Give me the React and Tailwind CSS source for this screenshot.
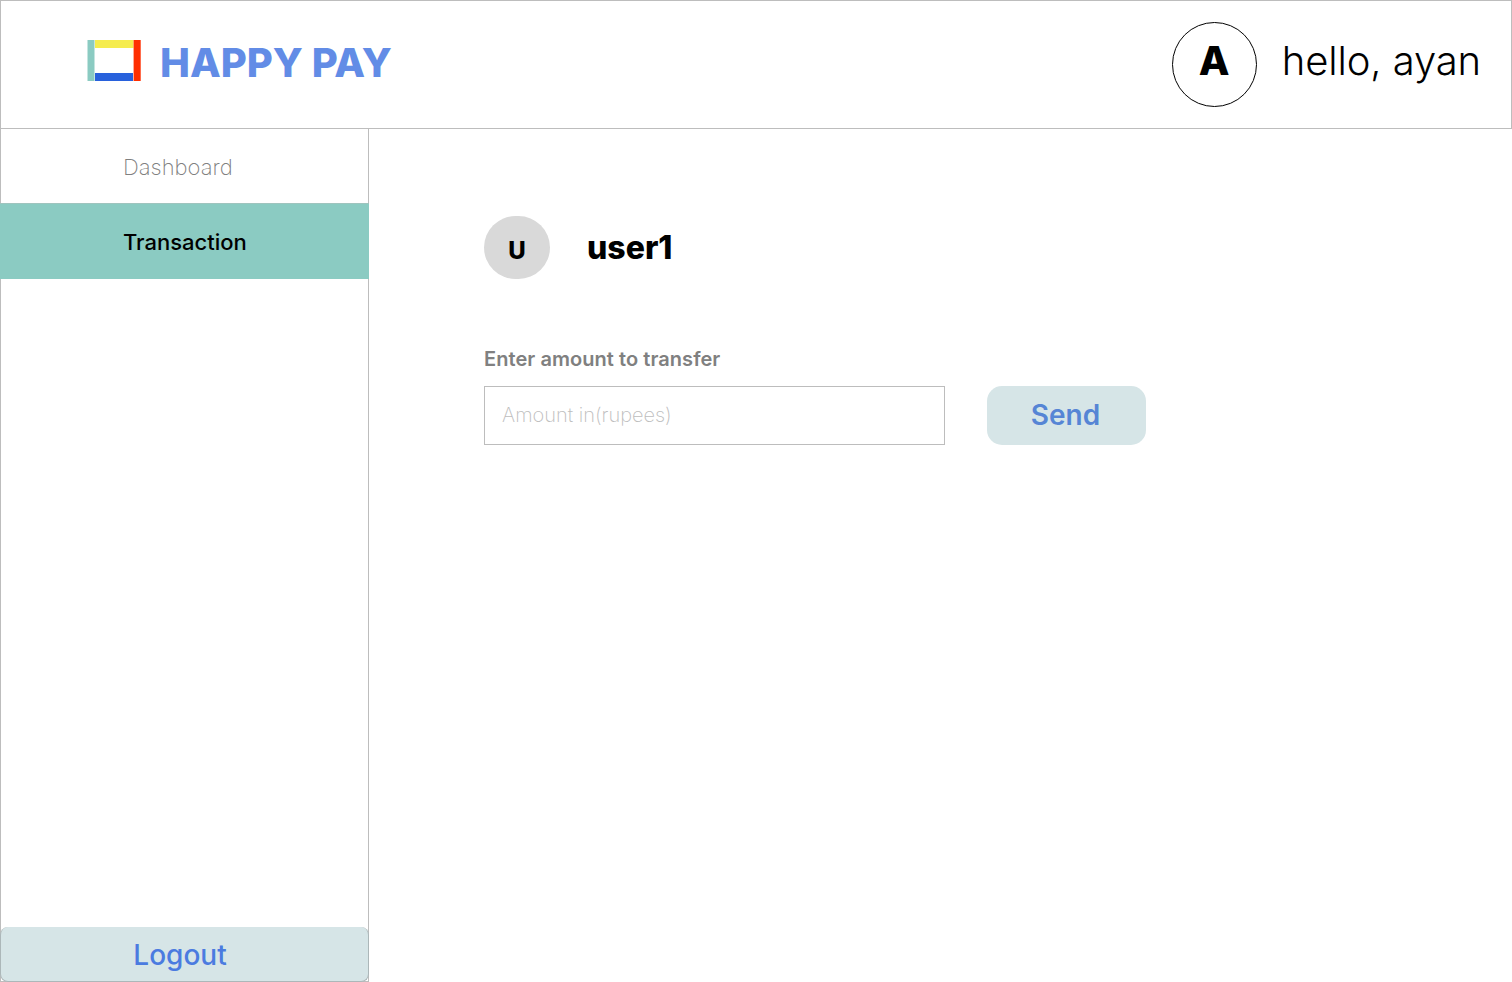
export default function App() {
  return (
    <div className="flex h-[982px] w-[1512px] flex-col overflow-hidden bg-white font-['Inter',sans-serif] text-black">
      <header className="flex h-[129px] shrink-0 items-start justify-between border border-[#bdbdbd] pl-[86px] pr-[30px]">
        <div className="flex items-start pt-[38px]">
          <svg className="mt-px h-[41px] w-[54px]" viewBox="0 0 54 41">
            <rect x="0.5" width="7" height="41" fill="#8bcbc2" />
            <rect x="8" width="38.5" height="8" fill="#f5ec4e" />
            <rect x="8" y="33" width="38" height="8" fill="#2861dc" />
            <rect x="46.6" width="7.1" height="41" fill="#ff2e00" />
          </svg>
          <h1 className="ml-[19px] text-[40px] leading-[48px] font-extrabold whitespace-nowrap text-[#628ce6]">HAPPY PAY</h1>
        </div>
        <div className="flex items-start pt-[21px]">
          <div className="flex h-[85px] w-[85px] justify-center rounded-full border border-black pt-[14px] text-[40px] leading-[48px] font-extrabold">A</div>
          <span className="ml-[25px] pt-[15px] text-[40px] leading-[48px] font-light tracking-[-0.1px] whitespace-nowrap">hello, ayan</span>
        </div>
      </header>
      <div className="flex flex-1">
        <aside className="flex w-[369px] shrink-0 flex-col border border-t-0 border-[#bdbdbd]">
          <nav className="flex flex-1 flex-col">
            <a className="flex h-[74px] items-center pl-[122px] pt-[3px] text-[22px] font-extralight text-[#808080]">Dashboard</a>
            <a className="-mx-px flex h-[76px] items-center border-t border-[#9fc4be] bg-[#8bcbc2] pl-[123px] pt-px text-[22px] font-medium">Transaction</a>
          </nav>
          <button className="-mx-px -mb-px h-[55px] rounded-lg border-x border-b border-[#acb7b9] bg-[#d6e5e7] pr-[9px] pt-px text-[28px] font-medium text-[#4b7be0]">Logout</button>
        </aside>
        <main className="pl-[115px] pt-[87px]">
          <div className="flex items-center">
            <div className="flex h-[63px] w-[66px] items-center justify-center rounded-full bg-[#d9d9d9] pt-[6px] text-[24px] leading-none font-extrabold">U</div>
            <h2 className="ml-[37px] text-[32px] font-extrabold">user1</h2>
          </div>
          <label className="mt-[68px] block text-[20px] leading-[24px] font-semibold tracking-[0.06px] text-[#808080]">Enter amount to transfer</label>
          <div className="mt-[15px] flex">
            <input className="h-[59px] w-[461px] border border-[#bdbdbd] pb-[2px] pl-[17px] text-[20px] font-extralight placeholder:text-[#bdbdbd]" placeholder="Amount in(rupees)" />
            <button className="ml-[42px] h-[59px] w-[159px] rounded-[15px] bg-[#d6e5e7] pr-[2px] pb-[2px] text-[28px] font-semibold text-[#5685d5]">Send</button>
          </div>
        </main>
      </div>
    </div>
  );
}
